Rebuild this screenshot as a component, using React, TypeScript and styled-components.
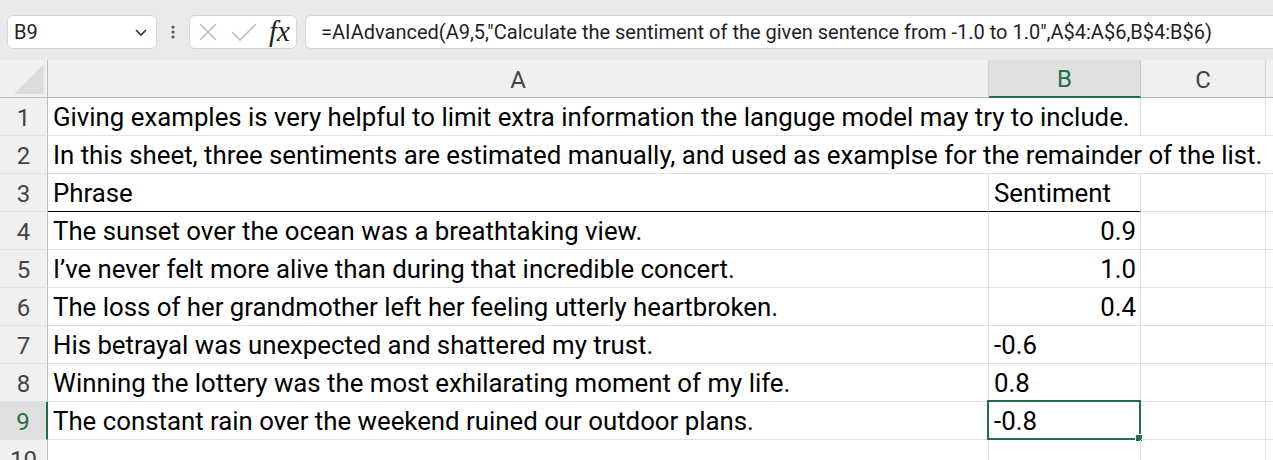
import React from "react";
import styled, { createGlobalStyle } from "styled-components";

const Global = createGlobalStyle`
  html, body { margin: 0; padding: 0; background: #ffffff; overflow: hidden; }
  body { font-family: Roboto, "Liberation Sans", sans-serif; }
`;

const GREEN = "#1e7145";
const GRID = "#e1e1e1";
const COLS = "48px 941px 152px 125px 1fr";

const Page = styled.div`
  width: 1273px;
  height: 460px;
  overflow: hidden;
  display: flex;
  flex-direction: column;
`;

const Toolbar = styled.div`
  flex: 0 0 60px;
  height: 60px;
  background: #e9e9e9;
  display: flex;
  align-items: flex-start;
  padding: 15px 0 0 7px;
  box-sizing: border-box;
`;

const Box = styled.div`
  height: 34px;
  background: #ffffff;
  border: 1px solid #d6d6d6;
  border-radius: 6px;
  box-sizing: border-box;
  display: flex;
  align-items: center;
`;

const NameBox = styled(Box)`
  width: 150px;
  padding: 0 8px 0 6px;
  justify-content: space-between;
  font-family: Roboto, "Liberation Sans", sans-serif;
  font-size: 20px;
  color: #1f1f1f;
`;

const Dots = styled.div`
  width: 32px;
  display: flex;
  justify-content: center;
  align-items: center;
  height: 34px;
`;

const IconBox = styled(Box)`
  width: 108px;
  padding: 0 5px 0 8px;
  justify-content: space-between;
`;

const Fx = styled.span`
  font-family: "Liberation Serif", "DejaVu Serif", serif;
  font-style: italic;
  font-size: 29px;
  line-height: 1;
  color: #1f1f1f;
  letter-spacing: 0px;
  margin-right: 1px;
  margin-top: -2px;
`;

const FormulaBox = styled(Box)`
  flex: 1;
  margin-left: 8px;
  border-right: none;
  border-radius: 6px 0 0 6px;
  padding-left: 15px;
  font-family: Roboto, "Liberation Sans", sans-serif;
  font-size: 20px;
  color: #1f1f1f;
  white-space: nowrap;
`;

const Grid = styled.div`
  flex: 0 0 auto;
  display: grid;
  grid-template-columns: ${COLS};
  grid-auto-rows: 38px;
`;

const ColHead = styled.div<{ $sel?: boolean }>`
  background: ${(p) => (p.$sel ? "#e0e0e0" : "#f0f0f0")};
  border-right: 1px solid ${(p) => (p.$sel ? "#c6c6c6" : "#d4d4d4")};
  border-bottom: ${(p) => (p.$sel ? `2px solid ${GREEN}` : "1px solid #bdbdbd")};
  box-sizing: border-box;
  display: flex;
  align-items: center;
  justify-content: center;
  font-family: Roboto, "Liberation Sans", sans-serif;
  font-size: 24px;
  color: ${(p) => (p.$sel ? GREEN : "#444444")};
  padding-top: 2px;
`;

const Corner = styled.div`
  background: #f0f0f0;
  border-right: 1px solid #bdbdbd;
  border-bottom: 1px solid #bdbdbd;
  box-sizing: border-box;
  display: flex;
  align-items: flex-end;
  justify-content: flex-end;
  padding: 0 3px 3px 0;
`;

const RowHead = styled.div<{ $sel?: boolean }>`
  background: ${(p) => (p.$sel ? "#e0e0e0" : "#f0f0f0")};
  border-right: ${(p) => (p.$sel ? `2px solid ${GREEN}` : "1px solid #bdbdbd")};
  border-bottom: 1px solid ${GRID};
  box-sizing: border-box;
  display: flex;
  align-items: center;
  justify-content: center;
  font-family: Roboto, "Liberation Sans", sans-serif;
  font-size: 24px;
  color: ${(p) => (p.$sel ? GREEN : "#444444")};
  padding-top: 3px;
`;

const Cell = styled.div<{ $span?: number; $right?: boolean; $under?: boolean; $noRight?: boolean }>`
  grid-column: span ${(p) => p.$span ?? 1};
  position: relative;
  border-right: ${(p) => (p.$noRight ? "none" : `1px solid ${GRID}`)};
  border-bottom: 1px solid ${(p) => (p.$under ? "#000000" : GRID)};
  box-sizing: border-box;
  display: flex;
  align-items: flex-end;
  justify-content: ${(p) => (p.$right ? "flex-end" : "flex-start")};
  padding: 0 4px 2px 5px;
  font-family: Roboto, sans-serif;
  font-size: 25.8px;
  line-height: 32px;
  color: #000000;
  white-space: nowrap;
  overflow: visible;
`;

const Active = styled.div`
  position: absolute;
  left: -2px;
  top: -2px;
  right: -1px;
  bottom: -1px;
  border: 2px solid ${GREEN};
  pointer-events: none;
`;

const Handle = styled.div`
  position: absolute;
  right: -4px;
  bottom: -4px;
  width: 6px;
  height: 6px;
  background: ${GREEN};
  border: 1px solid #ffffff;
`;

const rows: { a: string; b?: string; bRight?: boolean; spanA?: number }[] = [
  { a: "Giving examples is very helpful to limit extra information the languge model may try to include.", spanA: 2 },
  { a: "In this sheet, three sentiments are estimated manually, and used as examplse for the remainder of the list.", spanA: 4 },
  { a: "Phrase", b: "Sentiment" },
  { a: "The sunset over the ocean was a breathtaking view.", b: "0.9", bRight: true },
  { a: "I\u2019ve never felt more alive than during that incredible concert.", b: "1.0", bRight: true },
  { a: "The loss of her grandmother left her feeling utterly heartbroken.", b: "0.4", bRight: true },
  { a: "His betrayal was unexpected and shattered my trust.", b: "-0.6" },
  { a: "Winning the lottery was the most exhilarating moment of my life.", b: "0.8" },
  { a: "The constant rain over the weekend ruined our outdoor plans.", b: "-0.8" },
  { a: "" },
];

export default function App() {
  return (
    <Page>
      <Global />
      <Toolbar>
        <NameBox>
          <span>B9</span>
          <svg width="14" height="14" viewBox="0 0 14 14">
            <path d="M2 5 L7 10 L12 5" fill="none" stroke="#333" strokeWidth="1.6" />
          </svg>
        </NameBox>
        <Dots>
          <svg width="4" height="14" viewBox="0 0 4 14">
            <circle cx="2" cy="2" r="1.5" fill="#555" />
            <circle cx="2" cy="7" r="1.5" fill="#555" />
            <circle cx="2" cy="12" r="1.5" fill="#555" />
          </svg>
        </Dots>
        <IconBox>
          <svg width="20" height="20" viewBox="0 0 20 20">
            <path d="M2 2 L18 18 M18 2 L2 18" stroke="#b4b4b4" strokeWidth="1.4" fill="none" />
          </svg>
          <svg width="26" height="20" viewBox="0 0 26 20">
            <path d="M1 10 L9 18 L25 2" stroke="#b4b4b4" strokeWidth="1.4" fill="none" />
          </svg>
          <Fx>fx</Fx>
        </IconBox>
        <FormulaBox>=AIAdvanced(A9,5,"Calculate the sentiment of the given sentence from -1.0 to 1.0",A$4:A$6,B$4:B$6)</FormulaBox>
      </Toolbar>
      <Grid>
        <Corner>
          <svg width="30" height="30" viewBox="0 0 30 30">
            <path d="M30 0 L30 30 L0 30 Z" fill="#dcdcdc" />
          </svg>
        </Corner>
        <ColHead>A</ColHead>
        <ColHead $sel>B</ColHead>
        <ColHead>C</ColHead>
        <ColHead />
        {rows.map((r, i) => {
          const n = i + 1;
          const sel = n === 9;
          const under = n === 3;
          const span = r.spanA ?? 1;
          const rest = 4 - span;
          return (
            <React.Fragment key={n}>
              <RowHead $sel={sel}>{n}</RowHead>
              <Cell $span={span} $under={under} $noRight={span === 4}>
                {r.a}
              </Cell>
              {span === 1 && (
                <Cell $right={r.bRight} $under={under}>
                  {r.b}
                  {sel && (
                    <Active>
                      <Handle />
                    </Active>
                  )}
                </Cell>
              )}
              {rest >= 2 && <Cell />}
              {rest >= 1 && <Cell $noRight />}
            </React.Fragment>
          );
        })}
      </Grid>
    </Page>
  );
}
